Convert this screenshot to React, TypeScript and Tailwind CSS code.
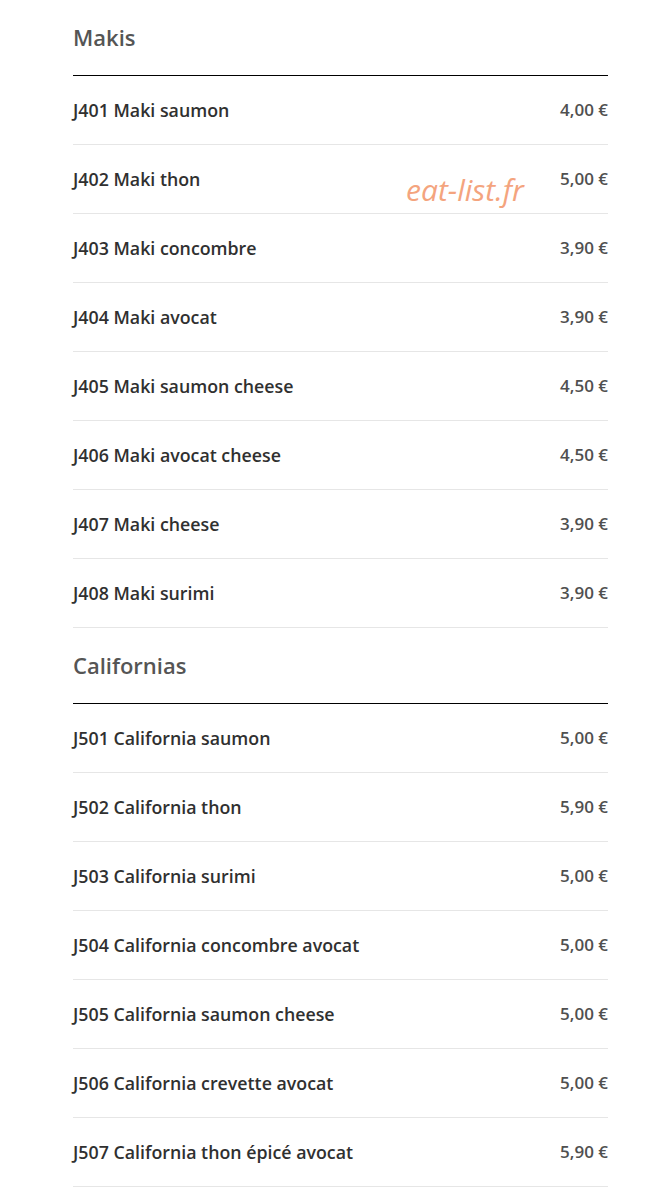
import React from "react";

const makis: [string, string][] = [
  ["J401 Maki saumon", "4,00 €"],
  ["J402 Maki thon", "5,00 €"],
  ["J403 Maki concombre", "3,90 €"],
  ["J404 Maki avocat", "3,90 €"],
  ["J405 Maki saumon cheese", "4,50 €"],
  ["J406 Maki avocat cheese", "4,50 €"],
  ["J407 Maki cheese", "3,90 €"],
  ["J408 Maki surimi", "3,90 €"],
];

const californias: [string, string][] = [
  ["J501 California saumon", "5,00 €"],
  ["J502 California thon", "5,90 €"],
  ["J503 California surimi", "5,00 €"],
  ["J504 California concombre avocat", "5,00 €"],
  ["J505 California saumon cheese", "5,00 €"],
  ["J506 California crevette avocat", "5,00 €"],
  ["J507 California thon épicé avocat", "5,90 €"],
];

function Section({ title, items }: { title: string; items: [string, string][] }) {
  return (
    <div>
      <div className="h-[74px] box-content border-b border-black flex items-center pb-[1px]">
        <h2 className="text-[22px] font-semibold text-[#555555] leading-none">{title}</h2>
      </div>
      {items.map(([name, price]) => (
        <div
          key={name}
          className="h-[68px] box-content border-b border-[#e6e6e6] flex items-center justify-between"
        >
          <span className="text-[17.8px] font-semibold text-[#303030]">{name}</span>
          <span className="text-[17px] font-semibold text-[#505050]">{price}</span>
        </div>
      ))}
    </div>
  );
}

export default function App() {
  return (
    <div
      className="relative bg-white min-h-[1197px] w-[648px] overflow-hidden"
      style={{ fontFamily: '"Open Sans", "Noto Sans", sans-serif' }}
    >
      <div className="ml-[73px] w-[535px]">
        <Section title="Makis" items={makis} />
        <Section title="Californias" items={californias} />
      </div>
      <div className="absolute left-[406px] top-[175px] text-[30px] italic text-[#f4a47e] leading-none">
        eat-list.fr
      </div>
    </div>
  );
}
